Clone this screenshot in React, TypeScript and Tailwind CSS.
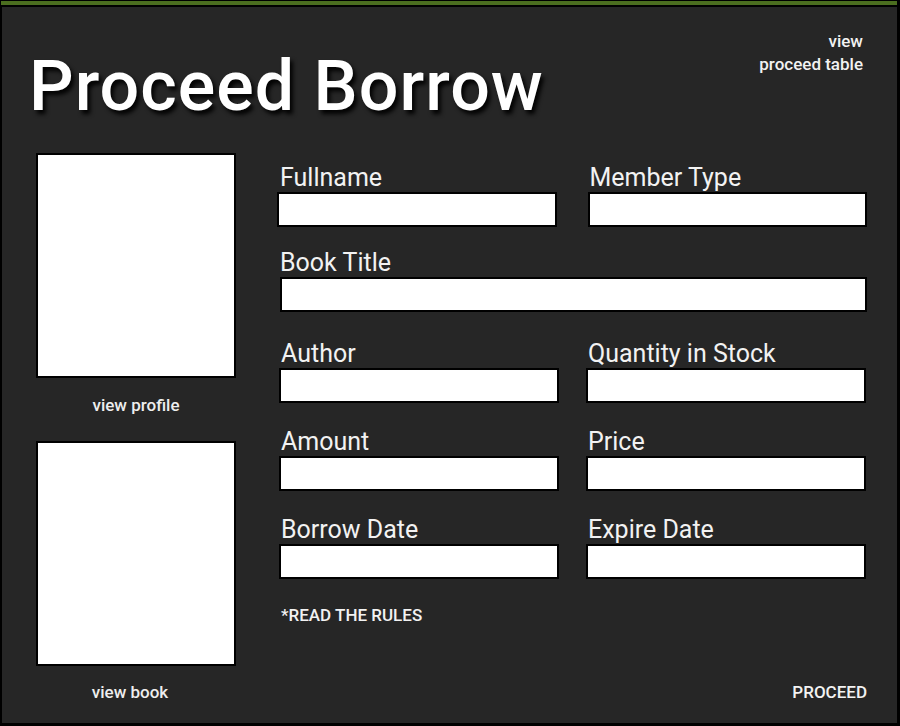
import type { ReactNode } from "react";

function Field({ label, className = "", labelClass = "pl-[2px]" }: { label: string; className?: string; labelClass?: string }) {
  return (
    <div className={className}>
      <p className={`text-[25px] leading-[26px] text-[#f2f2f2] ${labelClass}`}>{label}</p>
      <div className="mt-[1px] h-[35px] border-2 border-black bg-white" />
    </div>
  );
}

function Row({ children, className = "" }: { children: ReactNode; className?: string }) {
  return <div className={`flex ${className}`}>{children}</div>;
}

export default function App() {
  return (
    <div className="h-[726px] w-[900px] bg-black pt-[1px] font-['Roboto','Liberation_Sans',sans-serif]">
      <div className="mx-[1px] h-[4px] w-[896px] bg-[#4b6e1f]" />
      {/* main panel */}
      <div className="ml-[2px] mt-[2px] h-[716px] w-[895px] bg-[#262626] pt-[23px]">
        <div className="flex items-start justify-between">
          <h1 className="ml-[27px] mt-[21px] text-[70px] font-medium leading-none tracking-[1px] text-white [text-shadow:3px_4px_4px_rgba(0,0,0,0.95)]">
            Proceed Borrow
          </h1>
          <div className="mr-[34px] text-right text-[17px] font-medium leading-[23px] text-[#f2f2f2]">
            <p>view</p>
            <p>proceed table</p>
          </div>
        </div>

        <div className="mt-[32px] flex pl-[34px]">
          {/* photo column */}
          <div className="flex w-[200px] flex-col">
            <div className="h-[225px] border-2 border-black bg-white" />
            <p className="mt-[16px] text-center text-[17px] font-medium leading-[22px] text-[#eeeeee]">view profile</p>
            <div className="mt-[25px] h-[225px] border-2 border-black bg-white" />
            <p className="mr-[12px] mt-[15px] text-center text-[17px] font-medium leading-[22px] text-[#eeeeee]">view book</p>
          </div>

          {/* form */}
          <div className="ml-[41px] mt-[12px] flex w-[590px] flex-col">
            <Row>
              <Field label="Fullname" className="w-[280px]" labelClass="pl-[3px]" />
              <Field label="Member Type" className="ml-[31px] w-[280px]" />
            </Row>
            <Row className="mt-[23px]">
              <Field label="Book Title" className="ml-[3px] w-[587px]" labelClass="pl-0" />
            </Row>
            <Row className="mt-[29px]">
              <Field label="Author" className="ml-[2px] w-[280px]" />
              <Field label="Quantity in Stock" className="ml-[27px] w-[280px]" />
            </Row>
            <Row className="mt-[26px]">
              <Field label="Amount" className="ml-[2px] w-[280px]" />
              <Field label="Price" className="ml-[27px] w-[280px]" />
            </Row>
            <Row className="mt-[26px]">
              <Field label="Borrow Date" className="ml-[2px] w-[280px]" />
              <Field label="Expire Date" className="ml-[27px] w-[280px]" />
            </Row>
            <p className="ml-[4px] mt-[28px] text-[17px] font-medium leading-none text-[#f2f2f2]">*READ THE RULES</p>
            <p className="mt-[60px] self-end text-[17px] font-medium leading-none text-[#f2f2f2]">PROCEED</p>
          </div>
        </div>
      </div>
    </div>
  );
}
